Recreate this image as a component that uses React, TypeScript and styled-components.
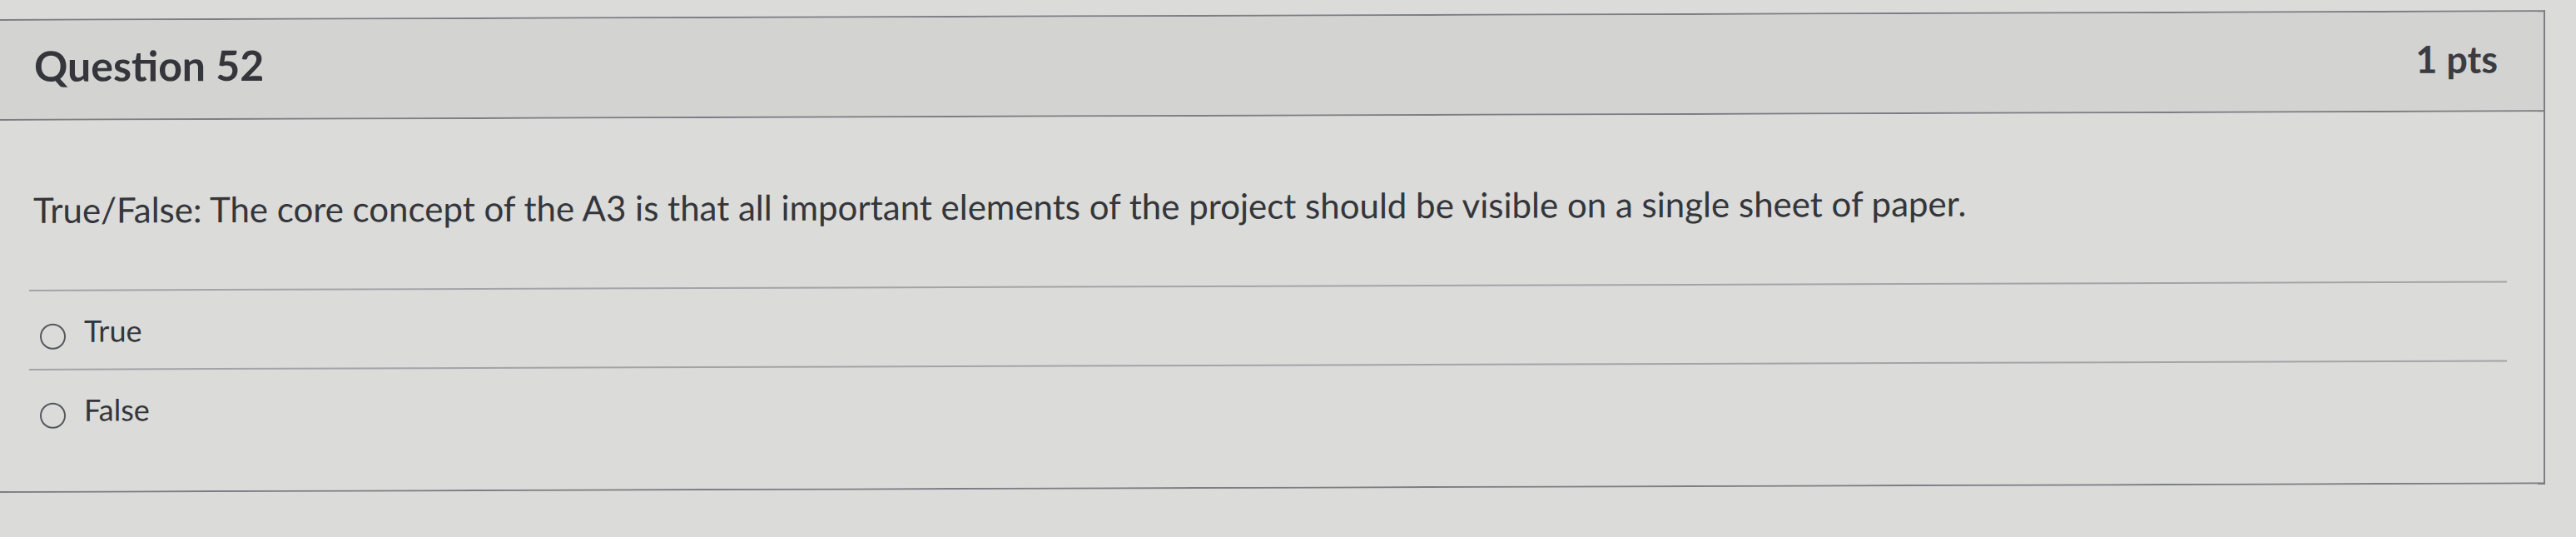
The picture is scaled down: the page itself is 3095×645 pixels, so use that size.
import React from "react";
import styled, { createGlobalStyle } from "styled-components";

const GlobalStyle = createGlobalStyle`
  html, body {
    margin: 0;
    padding: 0;
    background: #dbdbd9;
    font-family: Lato, "Open Sans", "Liberation Sans", sans-serif;
    color: #34363b;
    overflow: hidden;
  }
`;

const Page = styled.div`
  padding-top: 23px;
  width: 3095px;
  height: 645px;
  box-sizing: border-box;
`;

const Card = styled.section`
  width: 3058px;
  box-sizing: border-box;
  border: 2px solid #7d7e84;
  border-left: none;
  transform: skewY(-0.2deg);
  transform-origin: 0 0;
`;

const Header = styled.header`
  display: flex;
  align-items: baseline;
  justify-content: space-between;
  padding: 24px 55px 32px 41px;
  background: #d3d3d1;
  border-bottom: 2px solid #7d7e84;
`;

const Title = styled.h2`
  margin: 0;
  font-size: 50px;
  line-height: 60px;
  font-weight: 700;
  color: #34363b;
`;

const Points = styled.span`
  font-size: 45px;
  line-height: 60px;
  font-weight: 700;
  color: #3a3c42;
`;

const Body = styled.div`
  background: #dbdbd9;
  padding: 82px 44px 52px 35px;
`;

const QuestionText = styled.p`
  margin: 0 0 71px 5px;
  font-size: 42px;
  line-height: 50px;
  color: #34363b;
`;

const Answers = styled.div`
  display: flex;
  flex-direction: column;
`;

const AnswerRow = styled.label`
  display: flex;
  align-items: flex-start;
  gap: 22px;
  padding: 26px 0 23px 13px;
  border-top: 2px solid #a3a4a8;
`;

const Radio = styled.span`
  width: 31px;
  height: 31px;
  margin-top: 13px;
  box-sizing: border-box;
  border: 2.5px solid #55585e;
  border-radius: 50%;
  flex: none;
`;

const AnswerText = styled.span`
  font-size: 36px;
  line-height: 43px;
  color: #34363b;
`;

const answers = ["True", "False"];

export default function App() {
  return (
    <>
      <GlobalStyle />
      <Page>
        <Card>
          <Header>
            <Title>Question 52</Title>
            <Points>1 pts</Points>
          </Header>
          <Body>
            <QuestionText>
              True/False: The core concept of the A3 is that all important elements of the project should be visible on a single sheet of paper.
            </QuestionText>
            <Answers>
              {answers.map((a) => (
                <AnswerRow key={a}>
                  <Radio />
                  <AnswerText>{a}</AnswerText>
                </AnswerRow>
              ))}
            </Answers>
          </Body>
        </Card>
      </Page>
    </>
  );
}
